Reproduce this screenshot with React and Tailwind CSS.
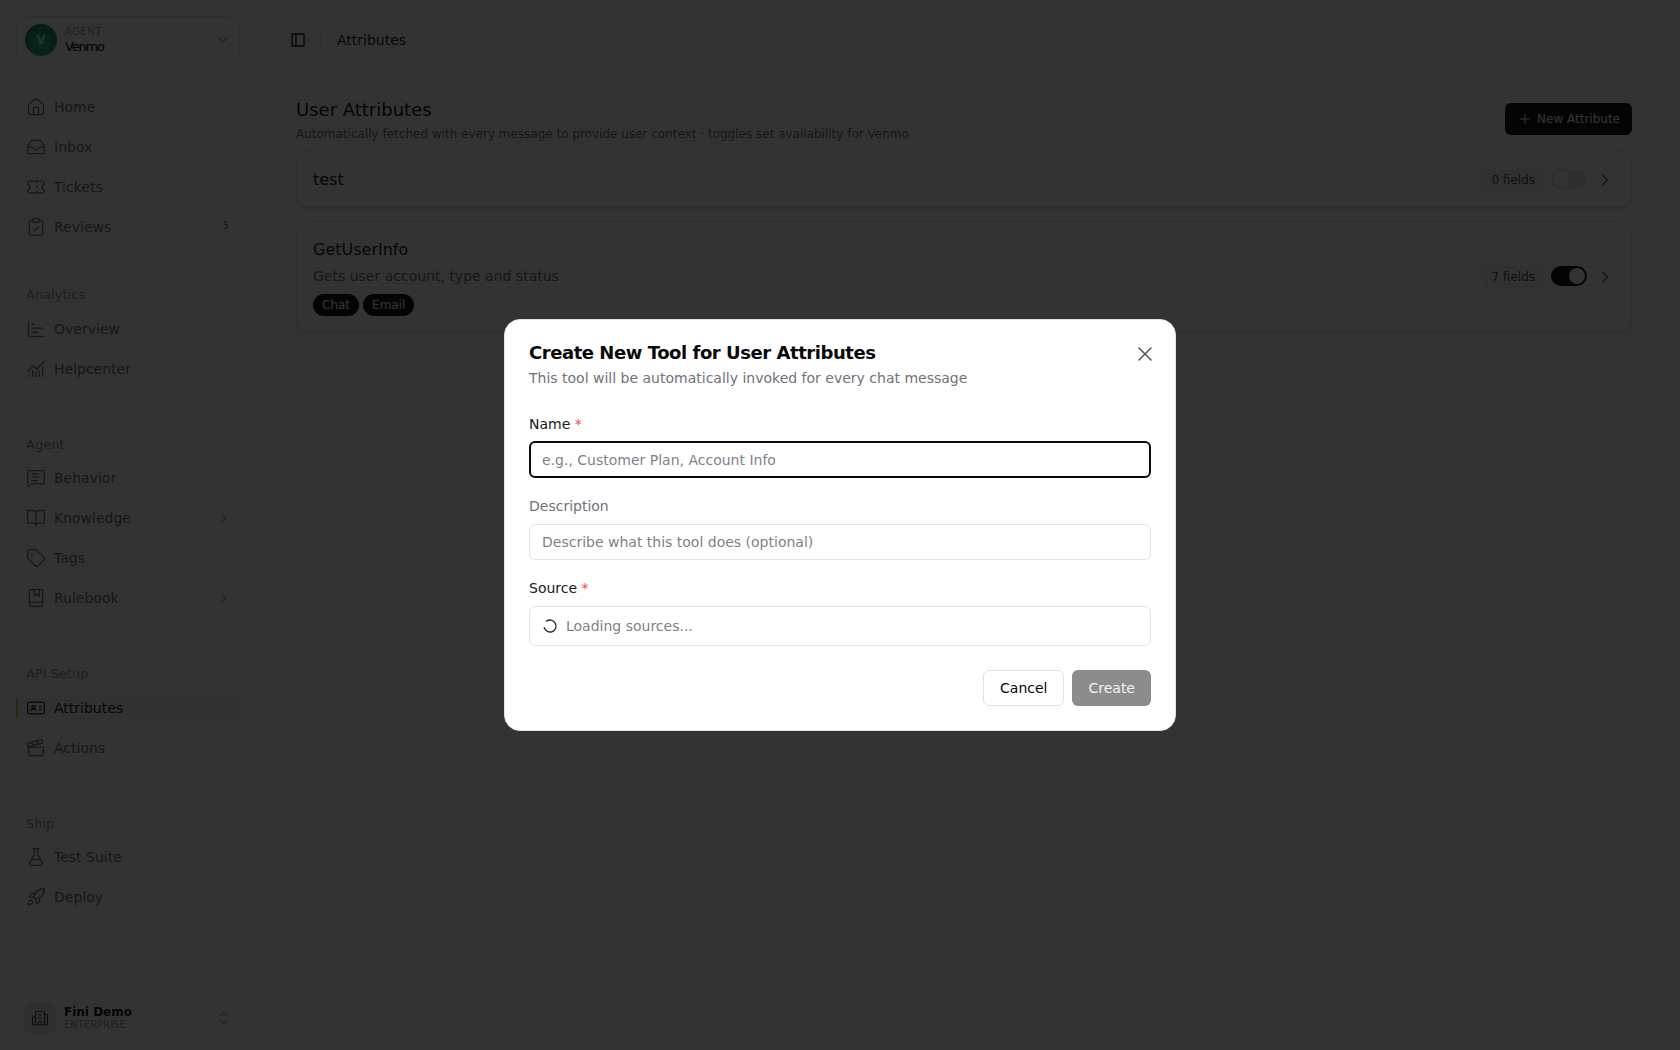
import React from 'react';
import {
  House, Inbox, Ticket, ClipboardCheck, ChartBar, ChartNoAxesCombined,
  MessageSquareText, BookOpen, Tag, BookMarked, IdCard, Clapperboard, FlaskConical,
  Rocket, Building2, ChevronsUpDown, ChevronDown, ChevronRight, PanelLeft, Plus, X, LoaderCircle,
} from 'lucide-react';

const FONT = 'font-["DejaVu_Sans",sans-serif]';

const NavRow = ({ icon: Icon, label, badge, arrow, active }) => (
  <div className={`relative flex h-9 items-center rounded-lg pl-[10px] pr-[10px] ${active ? 'bg-[#fafafa] text-[#18181b]' : 'text-[#71717a]'}`}>
    {active && <div className="absolute left-0 top-2 h-5 w-[2px] rounded-full bg-[#a3e635]"></div>}
    <Icon size={20} strokeWidth={1.5} className="shrink-0" />
    <span className="ml-2 text-sm">{label}</span>
    {badge && <span className="ml-auto mr-[1px] -mt-1 text-[10px] text-[#71717a]">{badge}</span>}
    {arrow && <ChevronRight size={14} strokeWidth={1.5} className="ml-auto -mr-[1px] text-[#71717a]" />}
  </div>
);

const NavGroup = ({ title, className, labelClass, children }) => (
  <div className={className}>
    {title && <div className={`${labelClass} h-5 px-[10px] text-[13px] leading-5 text-[#909098]`}>{title}</div>}
    <div className="flex flex-col gap-1">{children}</div>
  </div>
);

const Toggle = ({ on }) => (
  <div className={`flex h-5 w-9 items-center rounded-full border-2 ${on ? 'justify-end border-[#18181b] bg-[#18181b]' : 'justify-start border-[#e4e4e7] bg-[#e4e4e7]'}`}>
    <div className="h-4 w-4 rounded-full bg-white"></div>
  </div>
);

const FieldCount = ({ children }) => (
  <span className="-mr-[1px] mt-[2px] rounded-md bg-[#f4f4f5] px-[9px] py-1 text-xs leading-[14px] text-[#52525b]">{children}</span>
);

const App = () => {
  return (
    <div className={`${FONT} relative flex h-screen w-full overflow-hidden bg-white text-[#18181b]`}>
      {/* Sidebar */}
      <aside className="flex w-[257px] shrink-0 flex-col border-r border-[#f4f4f5] bg-white">
        <div className="h-[73px] shrink-0 border-b border-[#f4f4f5] px-4 pt-4">
          <div className="flex h-[47px] items-center rounded-xl border border-[#e4e4e7] pl-2 pr-2">
            <div className="flex h-8 w-8 items-center justify-center rounded-full bg-[radial-gradient(circle_at_50%_65%,#2fc79a,#0f7a5c)] text-xs font-semibold text-white/80">V</div>
            <div className="ml-2 pt-[2px]">
              <div className="text-[10px] leading-3 tracking-wider text-[#a1a1aa]">AGENT</div>
              <div className="mt-[1px] text-[13px] font-medium leading-4 tracking-[-1.2px] text-black">Venmo</div>
            </div>
            <ChevronDown size={16} strokeWidth={1.5} className="ml-auto text-[#71717a]" />
          </div>
        </div>

        <nav className="flex flex-1 flex-col px-4 pt-4">
          <NavGroup>
            <NavRow icon={House} label="Home" />
            <NavRow icon={Inbox} label="Inbox" />
            <NavRow icon={Ticket} label="Tickets" />
            <NavRow icon={ClipboardCheck} label="Reviews" badge="5" />
          </NavGroup>
          <NavGroup title="Analytics" className="mt-[40px]" labelClass="mb-[6px]">
            <NavRow icon={ChartBar} label="Overview" />
            <NavRow icon={ChartNoAxesCombined} label="Helpcenter" />
          </NavGroup>
          <NavGroup title="Agent" className="mt-[48px]" labelClass="mb-[5px]">
            <NavRow icon={MessageSquareText} label="Behavior" />
            <NavRow icon={BookOpen} label="Knowledge" arrow />
            <NavRow icon={Tag} label="Tags" />
            <NavRow icon={BookMarked} label="Rulebook" arrow />
          </NavGroup>
          <NavGroup title="API Setup" className="mt-[48px]" labelClass="mb-[6px]">
            <NavRow icon={IdCard} label="Attributes" active />
            <NavRow icon={Clapperboard} label="Actions" />
          </NavGroup>
          <NavGroup title="Ship" className="mt-[48px]" labelClass="mb-[5px]">
            <NavRow icon={FlaskConical} label="Test Suite" />
            <NavRow icon={Rocket} label="Deploy" />
          </NavGroup>
        </nav>

        <div className="flex h-[57px] shrink-0 items-start border-t border-[#f4f4f5] pl-6 pr-6 pt-[8px]">
          <div className="flex h-8 w-8 items-center justify-center rounded-lg bg-[#ececee] text-[#3f3f46]">
            <Building2 size={18} strokeWidth={1.5} />
          </div>
          <div className="ml-2 pt-[3px]">
            <div className="text-xs font-bold leading-[14px] text-[#18181b]">Fini Demo</div>
            <div className="text-[10px] leading-3 text-[#a1a1aa]">ENTERPRISE</div>
          </div>
          <ChevronsUpDown size={16} strokeWidth={1.5} className="ml-auto mt-2 text-[#71717a]" />
        </div>
      </aside>

      {/* Main */}
      <main className="mr-2 flex min-w-0 flex-1 flex-col border-r border-[#f4f4f5]">
        <header className="flex h-[80px] shrink-0 items-center pl-[33px]">
          <PanelLeft size={16} strokeWidth={2} className="text-[#18181b]" />
          <div className="ml-[14px] h-4 w-px bg-[#e4e4e7]"></div>
          <span className="ml-4 text-sm text-[#27272a]">Attributes</span>
        </header>

        <div className="pl-[39px] pr-[39px]">
          <div className="mt-[18px] flex items-start justify-between">
            <div>
              <h1 className="text-lg font-normal leading-6 text-[#18181b]">User Attributes</h1>
              <p className="mt-[4px] text-xs leading-4 text-[#71717a]">Automatically fetched with every message to provide user context · toggles set availability for Venmo</p>
            </div>
            <button className="mt-[5px] flex h-8 items-center gap-1 rounded-md bg-[#18181b] px-3 text-xs text-white">
              <Plus size={16} strokeWidth={1.5} />
              New Attribute
            </button>
          </div>

          <div className="mt-[8px] flex h-[58px] items-center rounded-xl border border-[#e4e4e7] pl-4 pr-4 shadow-sm">
            <span className="mt-[2px] text-base text-[#27272a]">test</span>
            <div className="ml-auto flex items-center gap-2">
              <FieldCount>0 fields</FieldCount>
              <Toggle />
              <ChevronRight size={20} strokeWidth={1.5} className="mt-[2px] text-[#71717a]" />
            </div>
          </div>

          <div className="mt-[13px] flex h-[111px] items-start rounded-xl border border-[#e4e4e7] pl-4 pr-4 pt-4 shadow-sm">
            <div>
              <div className="text-base leading-6 text-[#27272a]">GetUserInfo</div>
              <div className="mt-[2px] text-sm leading-6 text-[#71717a]">Gets user account, type and status</div>
              <div className="mt-[6px] flex gap-1">
                <span className="flex h-[22px] items-center rounded-full bg-[#18181b] px-[9px] text-xs text-white">Chat</span>
                <span className="flex h-[22px] items-center rounded-full bg-[#18181b] px-[9px] text-xs text-white">Email</span>
              </div>
            </div>
            <div className="ml-auto mt-[26px] flex items-center gap-2">
              <FieldCount>7 fields</FieldCount>
              <Toggle on />
              <ChevronRight size={20} strokeWidth={1.5} className="mt-[2px] text-[#71717a]" />
            </div>
          </div>
        </div>
      </main>

      {/* Overlay + modal */}
      <div className="absolute inset-0 flex items-start justify-center bg-black/80">
        <div className="mt-[319px] h-[412px] w-[672px] rounded-2xl border border-[#e4e4e7] bg-white p-6">
          <div className="flex items-start justify-between">
            <div>
              <h2 className="-mt-[1px] text-lg font-bold leading-5 tracking-tight text-[#09090b]">Create New Tool for User Attributes</h2>
              <p className="mt-[5px] text-sm leading-5 text-[#71717a]">This tool will be automatically invoked for every chat message</p>
            </div>
            <X size={24} strokeWidth={1.5} className="-mr-[6px] mt-[-2px] text-[#52525b]" />
          </div>

          <div className="mt-[26px] text-sm leading-5 text-[#18181b]">Name <span className="text-[#ef4444]">*</span></div>
          <div className="mt-[7px] flex h-[37px] items-center rounded-md border-2 border-[#09090b] px-[11px] text-sm text-[#7f7f88]">e.g., Customer Plan, Account Info</div>

          <div className="mt-[18px] text-sm leading-5 text-[#71717a]">Description</div>
          <div className="mt-[8px] flex h-9 items-center rounded-md border border-[#e4e4e7] px-3 text-sm text-[#7f7f88]">Describe what this tool does (optional)</div>

          <div className="mt-[18px] text-sm leading-5 text-[#18181b]">Source <span className="text-[#ef4444]">*</span></div>
          <div className="mt-[8px] flex h-10 items-center gap-2 rounded-md border border-[#e4e4e7] px-3 text-sm text-[#7f7f88]">
            <LoaderCircle size={16} strokeWidth={2} className="rotate-[-125deg] text-[#27272a]" />
            Loading sources...
          </div>

          <div className="mt-6 flex justify-end gap-2">
            <button className="h-9 rounded-md border border-[#e4e4e7] bg-white px-4 text-sm text-[#09090b]">Cancel</button>
            <button className="h-9 rounded-md bg-[#8c8c8c] px-4 text-sm text-white/90">Create</button>
          </div>
        </div>
      </div>
    </div>
  );
};

export default App;
